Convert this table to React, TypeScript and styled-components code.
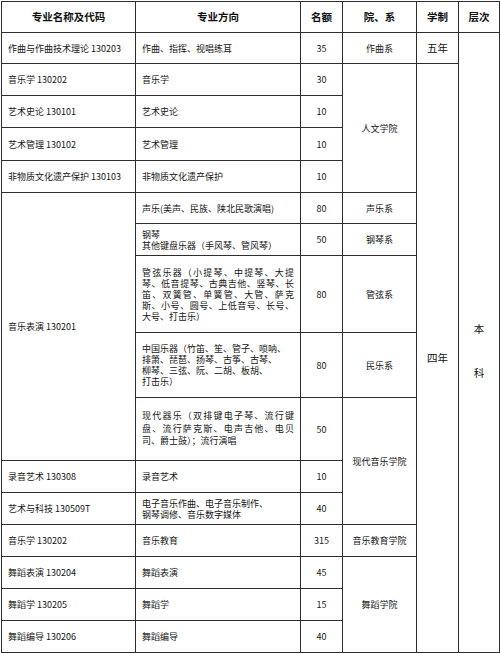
import React from "react";
import styled, { createGlobalStyle } from "styled-components";

const GlobalStyle = createGlobalStyle`
  html, body { margin: 0; padding: 0; background: #fff; }
  body { font-family: "Noto Sans CJK SC", "Noto Sans", sans-serif; color: #1a1a1a; }
`;

const Sheet = styled.table`
  border-collapse: collapse;
  table-layout: fixed;
  width: 498px;
  margin: 1px 0 0 1px;
  font-family: "Noto Sans CJK SC", "Noto Sans", sans-serif;
`;

const Row = styled.tr<{ $h: number }>`
  height: ${(p) => p.$h}px;
`;

const HeadCell = styled.th`
  border: 1px solid #2e2e2e;
  font-size: 10.5px;
  font-weight: 700;
  color: #111;
  text-align: center;
  vertical-align: middle;
  padding: 0;
  line-height: 12px;
`;

const Cell = styled.td<{ $center?: boolean; $lh?: number }>`
  border: 1px solid #2e2e2e;
  font-size: 9px;
  line-height: ${(p) => p.$lh ?? 11}px;
  color: #151515;
  text-align: ${(p) => (p.$center ? "center" : "left")};
  vertical-align: middle;
  padding: 0 ${(p) => (p.$center ? 0 : 6)}px;
  overflow: hidden;
  white-space: nowrap;
`;

const Term = styled.span`
  font-size: 10.5px;
  color: #111;
`;

const Line = styled.span<{ $justify?: boolean }>`
  display: block;
  text-align: left;
  text-align-last: ${(p) => (p.$justify ? "justify" : "left")};
`;

const Level = styled.div`
  display: flex;
  flex-direction: column;
  align-items: center;
  gap: 32px;
  font-size: 10.5px;
  line-height: 12px;
  padding-top: 16px;
  color: #111;
`;

const Lines = ({ items, justify = 0 }: { items: string[]; justify?: number }) => (
  <>
    {items.map((t, i) => (
      <Line key={i} $justify={i < justify}>
        {t}
      </Line>
    ))}
  </>
);

export default function App() {
  return (
    <>
      <GlobalStyle />
      <Sheet>
        <colgroup>
          <col style={{ width: 134 }} />
          <col style={{ width: 165 }} />
          <col style={{ width: 42 }} />
          <col style={{ width: 74 }} />
          <col style={{ width: 42 }} />
          <col style={{ width: 41 }} />
        </colgroup>
        <tbody>
          <Row $h={31}>
            <HeadCell>专业名称及代码</HeadCell>
            <HeadCell>专业方向</HeadCell>
            <HeadCell>名额</HeadCell>
            <HeadCell>院、系</HeadCell>
            <HeadCell>学制</HeadCell>
            <HeadCell>层次</HeadCell>
          </Row>
          <Row $h={31}>
            <Cell>作曲与作曲技术理论 130203</Cell>
            <Cell>作曲、指挥、视唱练耳</Cell>
            <Cell $center>35</Cell>
            <Cell $center>作曲系</Cell>
            <Cell $center>
              <Term>五年</Term>
            </Cell>
            <Cell $center rowSpan={16}>
              <Level>
                <span>本</span>
                <span>科</span>
              </Level>
            </Cell>
          </Row>
          <Row $h={32}>
            <Cell>音乐学 130202</Cell>
            <Cell>音乐学</Cell>
            <Cell $center>30</Cell>
            <Cell $center rowSpan={4}>人文学院</Cell>
            <Cell $center rowSpan={15}>
              <Term>四年</Term>
            </Cell>
          </Row>
          <Row $h={32}>
            <Cell>艺术史论 130101</Cell>
            <Cell>艺术史论</Cell>
            <Cell $center>10</Cell>
          </Row>
          <Row $h={33}>
            <Cell>艺术管理 130102</Cell>
            <Cell>艺术管理</Cell>
            <Cell $center>10</Cell>
          </Row>
          <Row $h={32}>
            <Cell>非物质文化遗产保护 130103</Cell>
            <Cell>非物质文化遗产保护</Cell>
            <Cell $center>10</Cell>
          </Row>
          <Row $h={31}>
            <Cell rowSpan={5}>音乐表演 130201</Cell>
            <Cell>声乐(美声、民族、陕北民歌演唱)</Cell>
            <Cell $center>80</Cell>
            <Cell $center>声乐系</Cell>
          </Row>
          <Row $h={32}>
            <Cell>
              <Lines items={["钢琴", "其他键盘乐器（手风琴、管风琴）"]} />
            </Cell>
            <Cell $center>50</Cell>
            <Cell $center>钢琴系</Cell>
          </Row>
          <Row $h={77}>
            <Cell $lh={11}>
              <Lines
                justify={4}
                items={[
                  "管弦乐器（小提琴、中提琴、大提",
                  "琴、低音提琴、古典吉他、竖琴、长",
                  "笛、双簧管、单簧管、大管、萨克",
                  "斯、小号、圆号、上低音号、长号、",
                  "大号、打击乐）",
                ]}
              />
            </Cell>
            <Cell $center>80</Cell>
            <Cell $center>管弦系</Cell>
          </Row>
          <Row $h={65}>
            <Cell $lh={11}>
              <Lines
                items={[
                  "中国乐器（竹笛、笙、管子、唢呐、",
                  "排箫、琵琶、扬琴、古筝、古琴、",
                  "柳琴、三弦、阮、二胡、板胡、",
                  "打击乐）",
                ]}
              />
            </Cell>
            <Cell $center>80</Cell>
            <Cell $center>民乐系</Cell>
          </Row>
          <Row $h={63}>
            <Cell $lh={12.5}>
              <Lines
                justify={2}
                items={[
                  "现代器乐（双排键电子琴、流行键",
                  "盘、流行萨克斯、电声吉他、电贝",
                  "司、爵士鼓）；流行演唱",
                ]}
              />
            </Cell>
            <Cell $center>50</Cell>
            <Cell $center rowSpan={3}>现代音乐学院</Cell>
          </Row>
          <Row $h={32}>
            <Cell>录音艺术 130308</Cell>
            <Cell>录音艺术</Cell>
            <Cell $center>10</Cell>
          </Row>
          <Row $h={32}>
            <Cell>艺术与科技 130509T</Cell>
            <Cell>
              <Lines items={["电子音乐作曲、电子音乐制作、", "钢琴调修、音乐数字媒体"]} />
            </Cell>
            <Cell $center>40</Cell>
          </Row>
          <Row $h={32}>
            <Cell>音乐学 130202</Cell>
            <Cell>音乐教育</Cell>
            <Cell $center>315</Cell>
            <Cell $center>音乐教育学院</Cell>
          </Row>
          <Row $h={32}>
            <Cell>舞蹈表演 130204</Cell>
            <Cell>舞蹈表演</Cell>
            <Cell $center>45</Cell>
            <Cell $center rowSpan={3}>舞蹈学院</Cell>
          </Row>
          <Row $h={32}>
            <Cell>舞蹈学 130205</Cell>
            <Cell>舞蹈学</Cell>
            <Cell $center>15</Cell>
          </Row>
          <Row $h={32}>
            <Cell>舞蹈编导 130206</Cell>
            <Cell>舞蹈编导</Cell>
            <Cell $center>40</Cell>
          </Row>
        </tbody>
      </Sheet>
    </>
  );
}
